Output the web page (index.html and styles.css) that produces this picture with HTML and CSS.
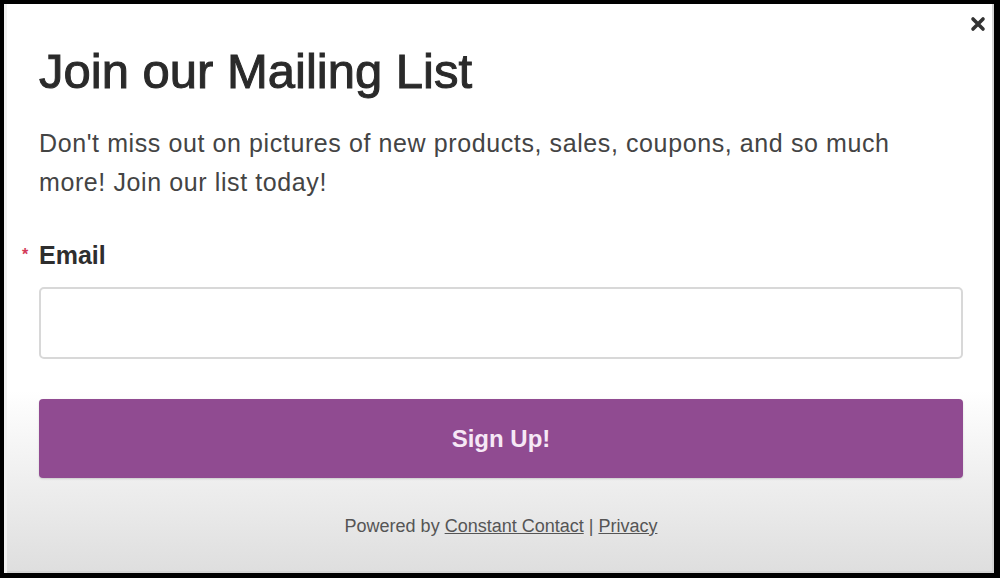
FILE: index.html
```html
<!DOCTYPE html>
<html lang="en">
<head>
<meta charset="utf-8">
<title>Join our Mailing List</title>
<link rel="stylesheet" href="styles.css">
</head>
<body>
<div class="frame">
  <button class="close" aria-label="Close">
    <svg width="16" height="16" viewBox="0 0 16 16"><path d="M3 3 L13 13 M13 3 L3 13" stroke="#333" stroke-width="3.6" stroke-linecap="round"/></svg>
  </button>
  <h1 class="title">Join our Mailing List</h1>
  <p class="lead">Don't miss out on pictures of new products, sales, coupons, and so much more! Join our list today!</p>
  <label class="label" for="email"><span class="req">*</span>Email</label>
  <input class="input" id="email" type="email">
  <button class="submit">Sign Up!</button>
  <p class="footer">Powered by <a href="#">Constant Contact</a> | <a href="#">Privacy</a></p>
</div>
</body>
</html>
```
FILE: styles.css
```css
html, body {
  margin: 0;
  padding: 0;
  background: #000;
}
body {
  width: 1000px;
  height: 578px;
  overflow: hidden;
  padding: 4px 6px 5px 4px;
  box-sizing: border-box;
}
.frame {
  position: relative;
  height: 569px;
  box-sizing: border-box;
  padding: 39px 31px 0 35px;
  display: flex;
  flex-direction: column;
  background: linear-gradient(to bottom, #ffffff 0%, #ffffff 68%, #dedede 100%);
  font-family: "Liberation Sans", Arial, sans-serif;
  box-shadow: inset 3px 0 0 #f1f1f1, inset -2px -2px 0 #d4d4d4;
}
.close {
  position: absolute;
  top: 12px;
  right: 8px;
  border: 0;
  background: none;
  padding: 0;
  width: 16px;
  height: 16px;
  display: flex;
}
.title {
  margin: 0;
  font-size: 49px;
  line-height: 56px;
  font-weight: 400;
  color: #2a2a2a;
  -webkit-text-stroke: 1px #2a2a2a;
}
.lead {
  margin: 25px 0 0;
  font-size: 25px;
  line-height: 39px;
  letter-spacing: 0.6px;
  color: #444;
  padding-right: 30px;
}
.label {
  margin: 38px 0 0 -17px;
  font-size: 25px;
  line-height: 30px;
  font-weight: 700;
  color: #2e2e2e;
  display: flex;
  align-items: center;
  gap: 9px;
}
.req {
  color: #d33a59;
  font-size: 16px;
  font-weight: 700;
  width: 8px;
}
.input {
  margin-top: 17px;
  height: 72px;
  box-sizing: border-box;
  border: 2px solid #d8d8d8;
  border-radius: 5px;
  background: #fff;
}
.submit {
  margin-top: 40px;
  height: 79px;
  border: 0;
  border-radius: 4px;
  background: #904b91;
  color: #f6e8f6;
  font-family: "Liberation Sans", Arial, sans-serif;
  font-size: 24px;
  font-weight: 700;
  box-shadow: 0 1px 2px rgba(0,0,0,0.15);
}
.footer {
  margin: 38px 0 0;
  text-align: center;
  font-size: 18px;
  line-height: 20px;
  color: #555;
}
.footer a {
  color: #555;
  text-decoration: underline;
}
```
